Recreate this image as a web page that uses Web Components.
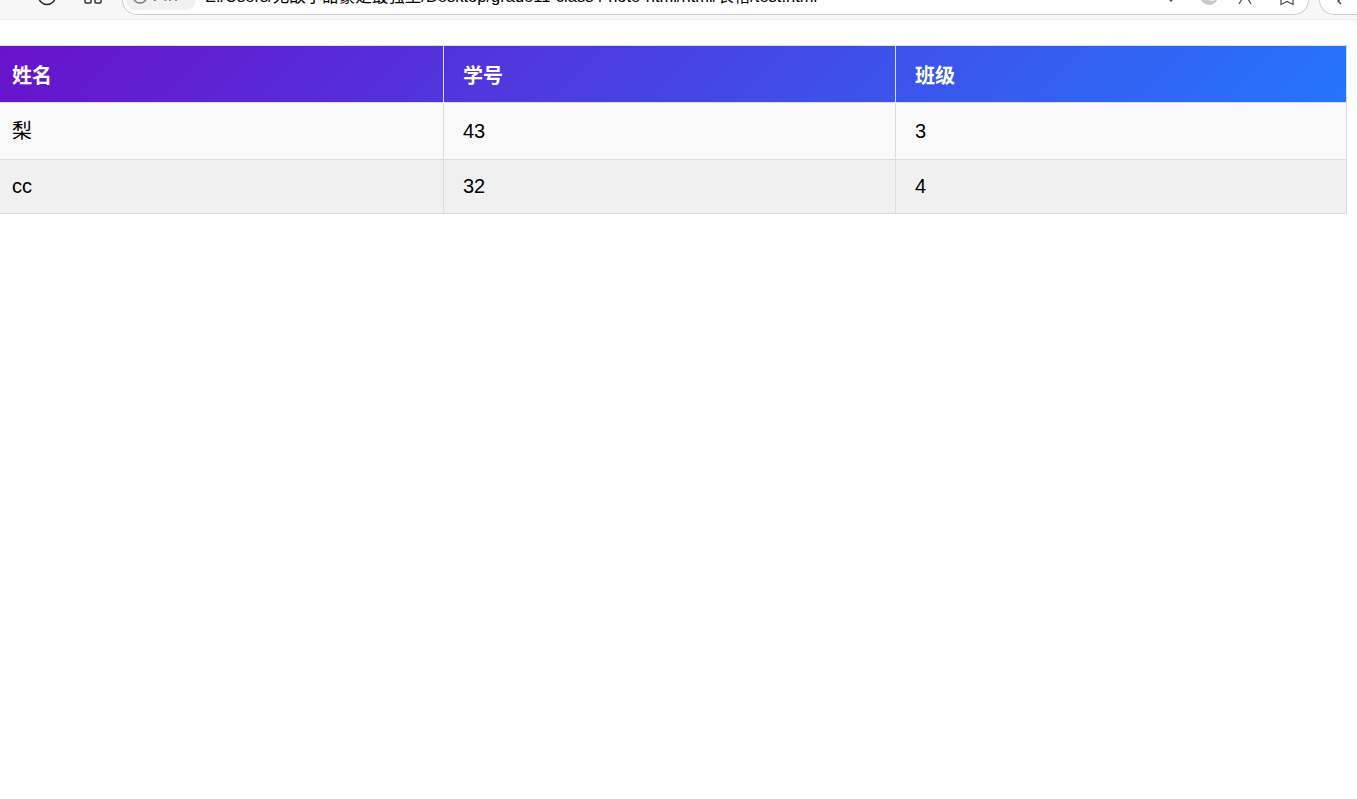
<!DOCTYPE html>
<html><head><meta charset="utf-8"><style>
html,body{margin:0;padding:0;background:#f7f7f7;height:100%;overflow:hidden}
body{font-family:"Liberation Sans","Noto Sans CJK SC",sans-serif}
</style></head><body>
<browser-bar></browser-bar>
<page-view>
<data-table>
<table-row kind="head"><table-cell>姓名</table-cell><table-cell>学号</table-cell><table-cell>班级</table-cell></table-row>
<table-row kind="odd"><table-cell>梨</table-cell><table-cell>43</table-cell><table-cell>3</table-cell></table-row>
<table-row kind="even"><table-cell>cc</table-cell><table-cell>32</table-cell><table-cell>4</table-cell></table-row>
</data-table>
</page-view>
<script>
function def(name,html){customElements.define(name,class extends HTMLElement{constructor(){super();this.attachShadow({mode:'open'}).innerHTML=html}})}
def('browser-bar',`<style>
:host{display:block;height:20px;background:#f7f7f7;overflow:hidden;box-sizing:border-box;border-bottom:1px solid #efefef}
.row{display:flex;align-items:flex-start;height:15px}
.ic{flex:none;display:block}
.omni{flex:none;margin-left:20px;width:1187px;height:15px;box-sizing:border-box;background:#fff;border:1px solid #cfcfcf;border-top:0;border-radius:0 0 20px 20px;display:flex;align-items:flex-start;overflow:hidden}
.chip{flex:none;display:flex;align-items:flex-start;width:70px;height:10px;background:#f1f1f1;border-radius:0 0 12px 12px;margin-left:3px;overflow:hidden}
.chiptx{font:14px/20px "Liberation Sans","Noto Sans CJK SC",sans-serif;color:#333;margin:-16px 0 0 4px;white-space:nowrap}
.url{flex:none;font:16.5px/20px "Liberation Sans","Noto Sans CJK SC",sans-serif;color:#000;white-space:nowrap;margin:-14px 0 0 9px}
.tools{margin-left:auto;display:flex;align-items:flex-start;padding-right:14px}
.next{flex:none;margin-left:10px;width:60px;height:15px;box-sizing:border-box;background:#fff;border:1px solid #cfcfcf;border-top:0;border-right:0;border-radius:0 0 0 18px}
.next svg{display:block;margin-left:15px}
</style><div class="row">
<svg class="ic" style="margin-left:37px" width="20" height="8" viewBox="0 0 20 8" fill="none" stroke="#222" stroke-width="1.5"><circle cx="10" cy="-4" r="8.5"/></svg>
<svg class="ic" style="margin-left:27px" width="18" height="8" viewBox="0 0 18 8" fill="none" stroke="#333" stroke-width="1.5"><rect x="1" y="-4" width="6" height="7" rx="1"/><rect x="11" y="-4" width="6" height="7" rx="1"/></svg>
<div class="omni"><div class="chip"><svg class="ic" style="margin-left:5px" width="18" height="6" viewBox="0 0 18 6" fill="none" stroke="#777" stroke-width="1.4"><circle cx="9" cy="-4" r="7"/></svg><span class="chiptx">文件</span></div><div class="url">E:/Users/无敌小甜豪是最强王/Desktop/grade11-class4-note-html/html/表格/test.html</div>
<div class="tools">
<svg class="ic" width="10" height="4" viewBox="0 0 10 4" fill="none" stroke="#555" stroke-width="1.3"><path d="M0 -2L3 1L6 -2"/></svg>
<svg class="ic" style="margin-left:20px" width="22" height="6" viewBox="0 0 22 6"><circle cx="11" cy="-4" r="9" fill="#c9c9c9"/><circle cx="14" cy="-5" r="6" fill="#eee"/></svg>
<svg class="ic" style="margin-left:17px" width="16" height="6" viewBox="0 0 16 6" fill="none" stroke="#555" stroke-width="1.3"><path d="M8 -6L2 4M8 -6L14 4"/></svg>
<svg class="ic" style="margin-left:27px" width="14" height="6" viewBox="0 0 14 6" fill="none" stroke="#555" stroke-width="1.3"><path d="M1 -2L1 4.5L7 1.5L13 4.5L13 -2"/></svg>
</div></div>
<div class="next"><svg width="12" height="5" viewBox="0 0 12 5" fill="none" stroke="#444" stroke-width="1.4"><path d="M8 -3L3 1L6 4"/></svg></div>
</div>`);
def('page-view',`<style>:host{display:block;background:#fff;border-radius:0 9px 0 0;height:779px;padding-top:25px;box-sizing:border-box;overflow:hidden}</style><slot></slot>`);
def('data-table',`<style>:host{display:block;width:1355px;margin-left:-8px;font-size:20px;line-height:23px;color:#000}</style><slot></slot>`);
customElements.define('table-row',class extends HTMLElement{constructor(){super();const k=this.getAttribute('kind');const s={head:'height:58px;background:linear-gradient(135deg,#6a11cb,#2575fc);color:#fff;font-weight:700;border-top:1px solid #ddd;border-bottom:1px solid #ddd;--pt:4px;',odd:'height:57px;background:#f9f9f9;border-bottom:1px solid #ddd;--pt:1px;',even:'height:54px;background:#f0f0f0;border-bottom:1px solid #ddd;--pt:0px;'}[k];this.attachShadow({mode:'open'}).innerHTML='<style>:host{display:grid;grid-template-columns:452px 452px 451px;box-sizing:border-box;'+s+'}</style><slot></slot>'}});
def('table-cell',`<style>:host{display:flex;align-items:center;padding:var(--pt) 0 0 19px;border-right:1px solid #ddd;box-sizing:border-box}:host(:first-child){padding-left:20px}</style><slot></slot>`);
</script>
</body></html>
